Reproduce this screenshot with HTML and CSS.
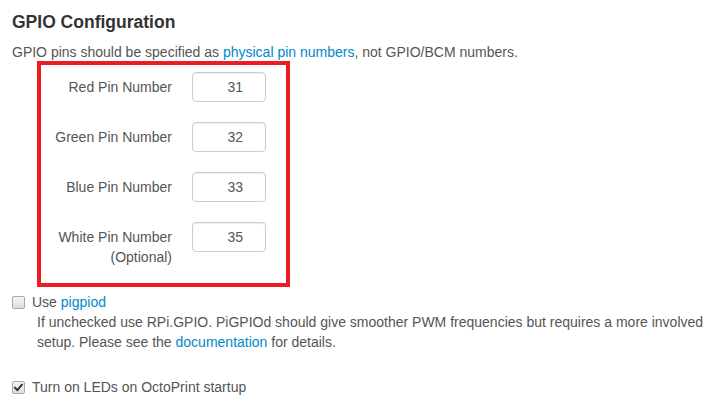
FILE: index.html
```html
<!DOCTYPE html>
<html>
<head>
<meta charset="utf-8">
<link rel="stylesheet" href="styles.css">
</head>
<body>
<div class="page">
  <h4 class="title">GPIO Configuration</h4>
  <p class="intro">GPIO pins should be specified as <a href="#">physical pin numbers</a>, not GPIO/BCM numbers.</p>
  <div class="pins">
    <div class="highlight"></div>
    <div class="group">
      <label class="group-label">Red Pin Number</label>
      <input class="pin-input" type="text" value="31">
    </div>
    <div class="group">
      <label class="group-label">Green Pin Number</label>
      <input class="pin-input" type="text" value="32">
    </div>
    <div class="group">
      <label class="group-label">Blue Pin Number</label>
      <input class="pin-input" type="text" value="33">
    </div>
    <div class="group">
      <label class="group-label">White Pin Number<br>(Optional)</label>
      <input class="pin-input" type="text" value="35">
    </div>
  </div>
  <div class="check-row">
    <span class="box"></span>
    <span class="check-text">Use <a href="#">pigpiod</a></span>
    <span class="help">If unchecked use RPi.GPIO. PiGPIOd should give smoother PWM frequencies but requires a more involved setup. Please see the <a href="#">documentation</a> for details.</span>
  </div>
  <div class="check-row second">
    <span class="box checked"><svg viewBox="0 0 13 13" width="13" height="13"><path d="M3 6.6 L5.4 9.2 L10 3.6" fill="none" stroke="#333" stroke-width="2" stroke-linecap="round" stroke-linejoin="round"/></svg></span>
    <span class="check-text">Turn on LEDs on OctoPrint startup</span>
  </div>
</div>
</body>
</html>
```
FILE: styles.css
```css
html, body {
  margin: 0;
  padding: 0;
  background: #ffffff;
}
.page {
  padding: 12px 12px 0 12px;
  font-family: "Liberation Sans", Arial, sans-serif;
  font-size: 14px;
  line-height: 20px;
  color: #555555;
}
a {
  color: #0088cc;
  text-decoration: none;
}
.title {
  margin: 0 0 10px;
  font-size: 17.5px;
  line-height: 20px;
  font-weight: bold;
  color: #333333;
}
.intro {
  margin: 0 0 10px;
}
.pins {
  position: relative;
  display: flex;
  flex-direction: column;
  gap: 20px;
  margin-bottom: 25px;
}
.highlight {
  position: absolute;
  left: 25px;
  top: -11px;
  bottom: -20px;
  width: 253px;
  box-sizing: border-box;
  border: 4px solid #ed1c24;
  pointer-events: none;
}
.group {
  display: flex;
  align-items: flex-start;
}
.group-label {
  width: 160px;
  margin-right: 20px;
  padding-top: 5px;
  text-align: right;
}
.pin-input {
  width: 74px;
  height: 30px;
  box-sizing: border-box;
  margin: 0;
  padding: 4px 22px 4px 6px;
  border: 1px solid #cccccc;
  border-radius: 4px;
  box-shadow: inset 0 1px 1px rgba(0, 0, 0, 0.075);
  font-family: "Liberation Sans", Arial, sans-serif;
  font-size: 14px;
  line-height: 20px;
  color: #555555;
  text-align: right;
  background: #ffffff;
}
.check-row {
  display: grid;
  grid-template-columns: 20px 1fr;
}
.check-row.second {
  margin-top: 25px;
}
.box {
  width: 13px;
  height: 13px;
  margin-top: 4px;
  box-sizing: border-box;
  border: 1px solid #a9a9a9;
  border-radius: 2px;
  background: linear-gradient(#f4f4f4, #dedede);
  display: block;
}
.box svg {
  display: block;
  margin: -1px 0 0 -1px;
}
.check-text {
  grid-column: 2;
  grid-row: 1;
}
.help {
  grid-column: 2;
  padding-left: 5px;
}
```
